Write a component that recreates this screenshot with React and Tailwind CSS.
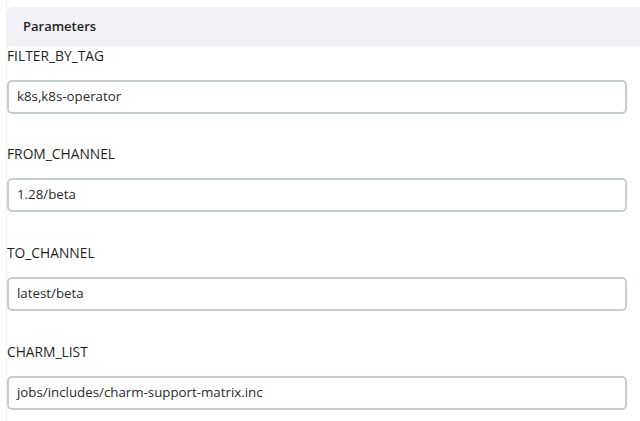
import React from "react";

const rows = [
  { label: "FILTER_BY_TAG", value: "k8s,k8s-operator", mb: "mb-[30px]" },
  { label: "FROM_CHANNEL", value: "1.28/beta", mb: "mb-[31px]" },
  { label: "TO_CHANNEL", value: "latest/beta", mb: "mb-[31px]" },
  { label: "CHARM_LIST", value: "jobs/includes/charm-support-matrix.inc", mb: "mb-[31px]" },
];

export default function App() {
  return (
    <div className="w-[640px] h-[421px] overflow-hidden bg-white text-[#1f1f1f] font-['Open_Sans',sans-serif]">
      <div className="ml-[6px] h-full border-l border-[#f1f1f3] pt-[7px]">
        <div className="h-[39px] bg-[#f2f2f6] rounded-tl-[6px] pl-[16px] flex items-center text-[13px] font-semibold text-[#222]">
          Parameters
        </div>
        {rows.map((r) => (
          <div key={r.label} className={r.mb}>
            <div className="h-[20px] pt-[1px] flex items-center text-[13.8px] text-[#1f1f1f]">{r.label}</div>
            <div className="mt-[14px] w-[620px] h-[34px] border-2 border-[#c5cdd0] rounded-[5px] flex items-center pl-[8px] text-[13.3px] text-[#2a2a2a]">
              {r.value}
            </div>
          </div>
        ))}
      </div>
    </div>
  );
}
